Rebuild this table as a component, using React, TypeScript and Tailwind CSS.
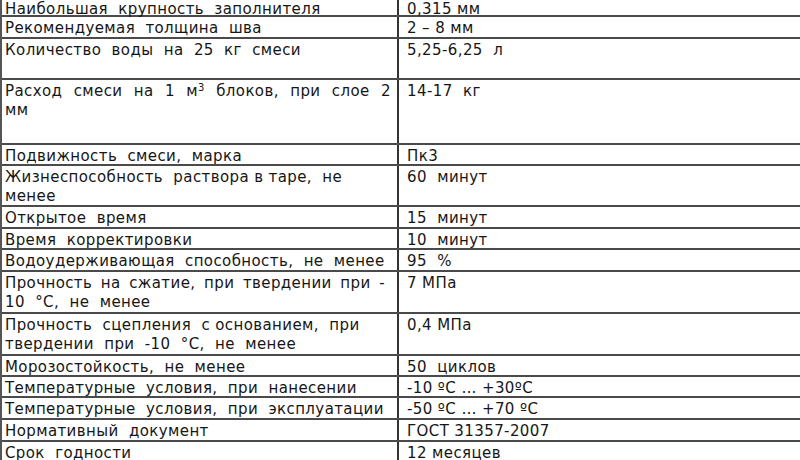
const rows: { h: string; left: React.ReactNode; right: string }[] = [
  { h: "h-[17px]", left: "Наибольшая  крупность  заполнителя", right: "0,315 мм" },
  { h: "h-[22px]", left: "Рекомендуемая  толщина  шва", right: "2 – 8 мм" },
  { h: "h-[41px]", left: "Количество  воды  на  25  кг  смеси", right: "5,25-6,25  л" },
  {
    h: "h-[65px]",
    left: (
      <>
        <span className="block [text-align-last:justify] pr-[2px]">
          Расход смеси на 1 м<sup className="text-[10px]">3</sup> блоков, при слое 2
        </span>
        <span className="block">мм</span>
      </>
    ),
    right: "14-17  кг",
  },
  { h: "h-[21px]", left: "Подвижность  смеси,  марка", right: "Пк3" },
  {
    h: "h-[41px]",
    left: (
      <>
        <span className="block">Жизнеспособность  раствора в таре,  не</span>
        <span className="block">менее</span>
      </>
    ),
    right: "60  минут",
  },
  { h: "h-[22px]", left: "Открытое  время", right: "15  минут" },
  { h: "h-[21px]", left: "Время  корректировки", right: "10  минут" },
  { h: "h-[22px]", left: "Водоудерживающая  способность,  не  менее", right: "95  %" },
  {
    h: "h-[42px]",
    left: (
      <>
        <span className="block [text-align-last:justify] pr-[8px]">
          Прочность на сжатие, при твердении при -
        </span>
        <span className="block">10  °С,  не  менее</span>
      </>
    ),
    right: "7 МПа",
  },
  {
    h: "h-[42px]",
    left: (
      <>
        <span className="block">Прочность  сцепления  с основанием,  при</span>
        <span className="block">твердении  при  -10  °С,  не  менее</span>
      </>
    ),
    right: "0,4 МПа",
  },
  { h: "h-[21px]", left: "Морозостойкость,  не  менее", right: "50  циклов" },
  { h: "h-[21px]", left: "Температурные  условия,  при  нанесении", right: "-10 ºС … +30ºС" },
  { h: "h-[22px]", left: "Температурные  условия,  при  эксплуатации", right: "-50 ºС … +70 ºС" },
  { h: "h-[22px]", left: "Нормативный  документ", right: "ГОСТ 31357-2007" },
  { h: "h-[20px]", left: "Срок  годности", right: "12 месяцев" },
];

export default function App() {
  return (
    <div className="w-[800px] h-[460px] overflow-hidden bg-white text-[#161616] font-['DejaVu_Sans',Verdana,sans-serif] text-[15px] leading-[19px] tracking-[0.4px]">
      <div className="border-l-2 border-[#555]">
        {rows.map((r, i) => (
          <div key={i} className={`flex ${r.h} border-b-2 border-[#4a4a4a]`}>
            <div className="w-[397px] shrink-0 border-r-2 border-[#333] pl-[3px] pr-[4px] whitespace-pre-wrap">
              <div className={i === 0 ? "pt-0" : "pt-[2px]"}>{r.left}</div>
            </div>
            <div className="flex-1 pl-[8px] whitespace-pre-wrap">
              <div className={i === 0 ? "pt-0" : "pt-[2px]"}>{r.right}</div>
            </div>
          </div>
        ))}
      </div>
    </div>
  );
}
